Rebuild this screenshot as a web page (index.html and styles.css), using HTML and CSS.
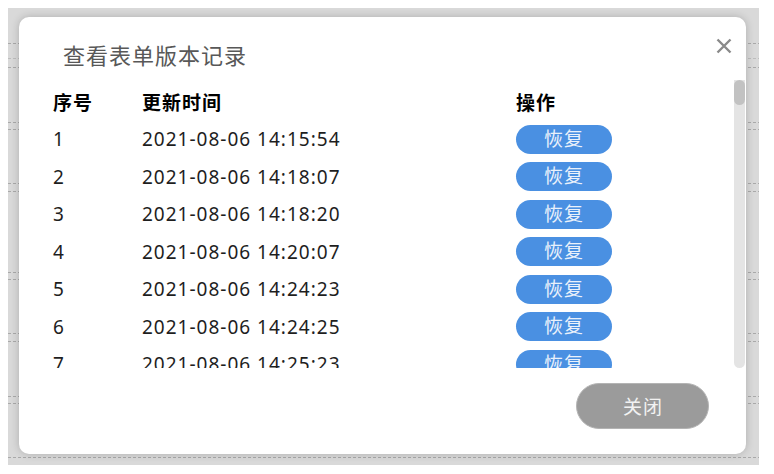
FILE: index.html
```html
<!DOCTYPE html>
<html lang="zh-CN">
<head>
<meta charset="utf-8">
<title>查看表单版本记录</title>
<link rel="stylesheet" href="styles.css">
</head>
<body>
<div class="backdrop">
  <svg class="bg-lines" width="751" height="457" viewBox="0 0 751 457">
    <g stroke="#a9a9a9" stroke-width="1" stroke-dasharray="3 2">
      <line x1="0" y1="35.5" x2="751" y2="35.5"/>
      <line x1="0" y1="50.5" x2="751" y2="50.5" stroke="#bdbdbd"/>
      <line x1="0" y1="59.5" x2="751" y2="59.5"/>
      <line x1="0" y1="114.5" x2="751" y2="114.5"/>
      <line x1="0" y1="121.5" x2="751" y2="121.5"/>
      <line x1="0" y1="175.5" x2="751" y2="175.5"/>
      <line x1="0" y1="183.5" x2="751" y2="183.5"/>
      <line x1="0" y1="264.5" x2="751" y2="264.5"/>
      <line x1="0" y1="271.5" x2="751" y2="271.5"/>
      <line x1="0" y1="325.5" x2="751" y2="325.5"/>
      <line x1="0" y1="333.5" x2="751" y2="333.5"/>
      <line x1="0" y1="388.5" x2="751" y2="388.5"/>
      <line x1="0" y1="395.5" x2="751" y2="395.5"/>
      <line x1="0" y1="449.5" x2="751" y2="449.5"/>
    </g>
  </svg>

  <div class="modal">
    <h2 class="modal-title">查看表单版本记录</h2>
    <button class="close-x" aria-label="关闭">
      <svg width="16" height="16" viewBox="0 0 16 16">
        <path d="M1.5 1.5 L14.5 14.5 M14.5 1.5 L1.5 14.5" stroke="#8a8a8a" stroke-width="2.4" stroke-linecap="butt" fill="none"/>
      </svg>
    </button>

    <div class="scroll-area">
      <div class="list">
        <div class="row head">
          <div>序号</div><div>更新时间</div><div>操作</div>
        </div>
        <div class="row"><div>1</div><div>2021-08-06 14:15:54</div><div><span class="restore">恢复</span></div></div>
        <div class="row"><div>2</div><div>2021-08-06 14:18:07</div><div><span class="restore">恢复</span></div></div>
        <div class="row"><div>3</div><div>2021-08-06 14:18:20</div><div><span class="restore">恢复</span></div></div>
        <div class="row"><div>4</div><div>2021-08-06 14:20:07</div><div><span class="restore">恢复</span></div></div>
        <div class="row"><div>5</div><div>2021-08-06 14:24:23</div><div><span class="restore">恢复</span></div></div>
        <div class="row"><div>6</div><div>2021-08-06 14:24:25</div><div><span class="restore">恢复</span></div></div>
        <div class="row"><div>7</div><div>2021-08-06 14:25:23</div><div><span class="restore">恢复</span></div></div>
        <div class="row"><div>8</div><div>2021-08-06 14:26:10</div><div><span class="restore">恢复</span></div></div>
      </div>
      <div class="scrollbar"><div class="thumb"></div></div>
    </div>

    <div class="footer">
      <button class="btn-close">关闭</button>
    </div>
  </div>
</div>
</body>
</html>
```

FILE: styles.css
```css
html, body {
  margin: 0;
  padding: 0;
  background: #ffffff;
}

body {
  padding: 8px;
  font-family: "Noto Sans", "Noto Sans CJK SC", sans-serif;
}

.backdrop {
  position: relative;
  width: 751px;
  height: 457px;
  background: #d9d9d9;
  overflow: hidden;
}

.bg-lines {
  display: block;
}

.modal {
  position: absolute;
  left: 11px;
  top: 9px;
  width: 727px;
  height: 437px;
  background: #ffffff;
  border-radius: 10px;
  box-shadow: 0 0 9px rgba(0, 0, 0, 0.2);
  display: flex;
  flex-direction: column;
}

.modal-title {
  margin: 0;
  padding: 23px 0 0 44px;
  font-size: 22px;
  line-height: 30px;
  font-weight: normal;
  letter-spacing: 1px;
  color: #585858;
}

.close-x {
  position: absolute;
  top: 21px;
  right: 14px;
  width: 16px;
  height: 16px;
  padding: 0;
  border: 0;
  background: none;
  display: flex;
}

.scroll-area {
  margin-top: 10px;
  margin-right: 1px;
  height: 288px;
  display: flex;
}

.list {
  flex: 1;
  overflow: hidden;
  padding: 3px 0 0 34px;
}

.row {
  display: grid;
  grid-template-columns: 89px 374px 1fr;
  height: 37.5px;
  align-items: center;
  font-size: 19px;
  letter-spacing: 1px;
  color: #1e1e1e;
}

.row.head {
  font-weight: bold;
  color: #000;
}

.restore {
  display: flex;
  align-items: center;
  justify-content: center;
  width: 96px;
  height: 29px;
  border-radius: 15px;
  background: #4a90e2;
  color: #e9f1fb;
  font-size: 19px;
  letter-spacing: 1px;
  line-height: 29px;
}

.scrollbar {
  width: 11px;
  background: #e4e4e4;
  border-radius: 0 0 6px 6px;
}

.thumb {
  height: 25px;
  background: #c2c2c2;
  border-radius: 6px;
}

.footer {
  margin-top: 15px;
  padding-right: 37px;
  display: flex;
  justify-content: flex-end;
}

.btn-close {
  width: 133px;
  height: 46px;
  border-radius: 23px;
  border: 1px solid #b4b4b4;
  background: #9b9b9b;
  color: #f2f2f2;
  font-family: "Noto Sans", "Noto Sans CJK SC", sans-serif;
  font-size: 19px;
  letter-spacing: 1px;
  padding: 0 0 0 1px;
}
```
